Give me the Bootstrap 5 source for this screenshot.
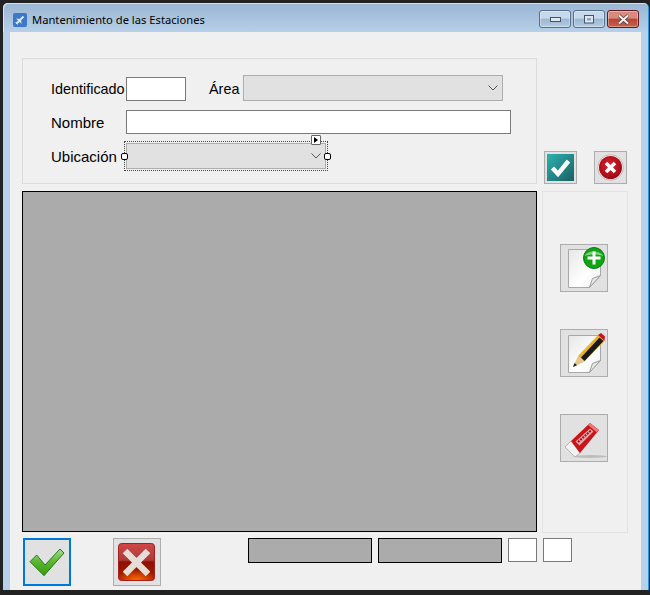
<!DOCTYPE html>
<html lang="es">
<head>
  <meta charset="UTF-8" />
  <meta name="viewport" content="width=device-width, initial-scale=1" />
  <title>Mantenimiento de las Estaciones</title>
  <link href="https://cdn.jsdelivr.net/npm/bootstrap@5.3.0/dist/css/bootstrap.min.css" rel="stylesheet">
  <style>
    html, body { height: 595px; overflow: hidden; }
    body { background: #222; padding: 3px 1px 0 3px; font-family: "Liberation Sans", Arial, sans-serif; color: #000; }
    .win-frame { width: 646px; height: 587px; background: #b8d1ea; padding: 0 7px 0 7px; border-radius: 5px 5px 0 0; border-right: 1px solid #14a0e0; }
    .win-title { height: 29px; margin: 0 -7px; padding: 5px 7px 0 10px; background: linear-gradient(#9ab5d2, #b7d0e9); border-radius: 5px 5px 0 0; box-shadow: inset 1px 1px 0 rgba(255,255,255,.55); }
    .win-title-text { font-family: "Noto Sans", sans-serif; font-size: 11.2px; margin-left: 5px; color: #000; }
    .app-ico { width: 14px; height: 14px; }
    .cap-btn { width: 32px; height: 18px; border: 1px solid #5a6f8c; border-radius: 3px; display: flex; align-items: center; justify-content: center; background: linear-gradient(#c6d8eb 0 45%, #9cb7d3 50%, #b4cbe2 100%); box-shadow: inset 0 0 0 1px rgba(255,255,255,.35); }
    .cap-close { border-color: #5e1c24; background: linear-gradient(#d98a7c 0 45%, #bb4331 50%, #c8604f 100%); }
    .cap-gap { gap: 2px; margin-right: 2px; margin-top: -2px; }
    .win-body { width: 631px; height: 558px; background: #f0f0f0; padding: 26px 0 0 12px; }
    .top-box { width: 515px; height: 126px; border: 1px solid #dcdcdc; padding: 16px 0 0 28px; }
    .fld-row { display: flex; align-items: center; }
    .lbl { font-size: 15px; line-height: 16px; white-space: nowrap; padding-top: 1px; }
    .lbl-tight { font-size: 14.4px; }
    .txt-in, .cmb-in { border-radius: 0; padding: 0; min-height: 0; }
    .txt-in { height: 24px; border: 1px solid #7a7a7a; background: #fff; }
    .cmb-in:disabled { height: 26px; border: 1px solid #adadad; background-color: #e1e1e1; opacity: 1;
      background-image: url("data:image/svg+xml,%3csvg xmlns='http://www.w3.org/2000/svg' viewBox='0 0 10 6'%3e%3cpath fill='none' stroke='%23555' d='M.5.5 5 5 9.5.5'/%3e%3c/svg%3e");
      background-position: right 4px center; background-size: 10px 6px; }
    .lbl-id { width: 75px; }
    .in-id { width: 60px; align-self: flex-end; }
    .lbl-area { margin-left: 23px; width: 34px; }
    .cmb-area { width: 260px; }
    .row-nom { margin-top: 9px; }
    .in-nom { width: 385px; }
    .row-ubi { margin-top: 9px; }
    .cmb-wrap { position: relative; width: 200px; }
    .cmb-wrap .cmb-in { width: 200px; display: block; }
    .sel-dots { position: absolute; left: -2px; right: -2px; top: -2px; bottom: -2px; border: 1px dotted #444; pointer-events: none; }
    .sel-hnd { position: absolute; top: 10px; width: 7px; height: 7px; background: #fff; border: 1px solid #000; border-radius: 2px; }
    .sel-hnd-l { left: -5px; }
    .sel-hnd-r { right: -5px; }
    .sel-tag { position: absolute; right: 5px; top: -8px; width: 10px; height: 10px; background: #fff; border: 1px solid #666; border-radius: 1px; }
    .sel-tag::after { content: ""; position: absolute; left: 2px; top: 1px; border-left: 4px solid #000; border-top: 3px solid transparent; border-bottom: 3px solid transparent; }
    .ok-col { margin-left: 7px; gap: 17px; align-self: flex-end; }
    .sq-btn { padding: 0; border: 1px solid #adadad; border-radius: 0; background: #e1e1e1; display: flex; align-items: center; justify-content: center; }
    .sq-33 { width: 33px; height: 33px; }
    .sq-48 { width: 48px; height: 48px; }
    .sq-focus { border: 2px solid #0078d7; }
    .mid-row { margin-top: 7px; height: 342px; }
    .grid-box { width: 515px; height: 341px; background: #ababab; border: 1px solid #000; }
    .side-box { width: 86px; margin-left: 5px; border: 1px solid #e3e3e3; padding: 52px 0 0 17px; gap: 37px; }
    .bot-row { margin-top: 5px; padding-left: 1px; }
    .btn-gap { margin-left: 42px; }
    .stat-bars { margin-left: 87px; gap: 6px; }
    .stat-bar { width: 124px; height: 25px; background: #ababab; border: 1px solid #000; }
    .stat-in { width: 29px; }
  </style>
</head>
<body>

<div class="win-frame">
  <div class="win-title d-flex align-items-center">
    <svg class="app-ico" viewBox="0 0 14 14">
      <rect width="14" height="14" rx="2" fill="#3a78c8"/>
      <path d="M3.500 10.500 10.500 3.500" stroke="#dbe8f6" stroke-width="2"/>
      <path d="M3 5.500l5 .5-2 2.500zM8.500 11l-.5-5-2.500 2z" fill="#dbe8f6"/>
      <path d="M2.500 9.500l2 2" stroke="#dbe8f6"/>
    </svg>
    <span class="win-title-text">Mantenimiento de las Estaciones</span>
    <div class="d-flex ms-auto cap-gap">
      <div class="cap-btn"><svg width="11" height="5" viewBox="0 0 11 5"><rect x=".5" y=".5" width="10" height="4" fill="#dfe6ee" stroke="#44546a"/></svg></div>
      <div class="cap-btn"><svg width="11" height="9" viewBox="0 0 11 9"><rect x=".5" y=".5" width="9" height="7.500" fill="#dfe6ee" stroke="#44546a"/><rect x="3" y="3" width="4" height="2.500" fill="#8ea6c0"/></svg></div>
      <div class="cap-btn cap-close"><svg width="13" height="11" viewBox="0 0 13 11"><path d="M2 1.500l9 8M11 1.500l-9 8" stroke="#4b3a3a" stroke-width="3.400"/><path d="M2 1.500l9 8M11 1.500l-9 8" stroke="#f2f2f2" stroke-width="2"/></svg></div>
    </div>
  </div>

  <div class="win-body">
    <div class="d-flex">
      <div class="top-box">
        <div class="fld-row">
          <span class="lbl lbl-tight lbl-id">Identificado</span>
          <input class="form-control txt-in in-id" type="text">
          <span class="lbl lbl-tight lbl-area">Área</span>
          <select class="form-select cmb-in cmb-area" disabled></select>
        </div>
        <div class="fld-row row-nom">
          <span class="lbl lbl-id">Nombre</span>
          <input class="form-control txt-in in-nom" type="text">
        </div>
        <div class="fld-row row-ubi">
          <span class="lbl lbl-id">Ubicación</span>
          <div class="cmb-wrap">
            <select class="form-select cmb-in" disabled></select>
            <span class="sel-dots"></span>
            <span class="sel-hnd sel-hnd-l"></span>
            <span class="sel-hnd sel-hnd-r"></span>
            <span class="sel-tag"></span>
          </div>
        </div>
      </div>
      <div class="d-flex ok-col">
        <button class="sq-btn sq-33" type="button">
          <svg width="27" height="27" viewBox="0 0 27 27">
            <defs><linearGradient id="teal" x1="0" y1="0" x2="1" y2="1"><stop offset="0" stop-color="#2bb3b0"/><stop offset="1" stop-color="#1c5f63"/></linearGradient></defs>
            <rect width="27" height="27" fill="url(#teal)"/>
            <path d="M5.500 14l5.500 6 10.500-13" fill="none" stroke="#fff" stroke-width="4.400"/>
          </svg>
        </button>
        <button class="sq-btn sq-33" type="button">
          <svg width="27" height="27" viewBox="0 0 27 27">
            <defs><radialGradient id="redball" cx=".45" cy=".4" r=".7"><stop offset="0" stop-color="#e2202c"/><stop offset="1" stop-color="#8e0610"/></radialGradient></defs>
            <circle cx="13.500" cy="13.500" r="12.800" fill="#f3f3f3" stroke="#c9b5b5"/>
            <circle cx="13.500" cy="13.500" r="11.500" fill="url(#redball)"/>
            <path d="M9 9l9 9M18 9l-9 9" stroke="#fff" stroke-width="3.600"/>
          </svg>
        </button>
      </div>
    </div>

    <div class="d-flex mid-row">
      <div class="grid-box"></div>
      <div class="d-flex flex-column side-box">
        <button class="sq-btn sq-48" type="button">
          <svg width="46" height="46" viewBox="0 0 46 46">
            <defs><linearGradient id="pg1" x1="0" y1="0" x2="1" y2="1"><stop offset="0" stop-color="#e6e6e6"/><stop offset=".6" stop-color="#fff"/><stop offset="1" stop-color="#ececec"/></linearGradient></defs>
            <path d="M7.500 4.500h32v26l-11 12h-21z" fill="url(#pg1)" stroke="#a8a8a8"/>
            <path d="M28.500 42.500l3-9 8-3z" fill="#e9e9e9" stroke="#9c9c9c"/>
            <circle cx="33" cy="13" r="10.500" fill="#12a512" stroke="#0b7a1a"/>
            <path d="M23.500 11c3-6 15-6 19 0-6-2-13-2-19 0z" fill="#79d779"/>
            <path d="M33 6.500v13M26.500 13h13" stroke="#fff" stroke-width="3"/>
          </svg>
        </button>
        <button class="sq-btn sq-48" type="button">
          <svg width="46" height="46" viewBox="0 0 46 46">
            <path d="M7.500 5.500h32v25l-11 12h-21z" fill="url(#pg1)" stroke="#a8a8a8"/>
            <path d="M28.500 42.500l3-9 8-3z" fill="#e9e9e9" stroke="#9c9c9c"/>
            <path d="M17 26 37 5l6.500 6-20.500 21z" fill="#e9b526"/>
            <path d="M20 27.500 38.500 7.500l4 3.500L23.500 31z" fill="#1b1b1b"/>
            <path d="M37 5l3-2 4 3.500-.5 4.500z" fill="#c9151b"/>
            <path d="M12 37l5-11 6 6z" fill="#e4c78c"/>
            <path d="M12 37l1.500-4 2.500 2.300z" fill="#222"/>
          </svg>
        </button>
        <button class="sq-btn sq-48" type="button">
          <svg width="46" height="46" viewBox="0 0 46 46">
            <ellipse cx="29" cy="41.500" rx="17" ry="1.500" fill="#bdbdbd"/>
            <path d="M4 32l6-6 9 12-5 4z" fill="#f1f1f1" stroke="#a9a9a9" stroke-width=".8"/>
            <path d="M10 26 29 8l9 7-19 23z" fill="#c9141c"/>
            <path d="M29 8l9 7-2 2.500-9-7.500z" fill="#e87a7a"/>
            <path d="M14.500 26.500 29 13.500l3.500 3-14 14z" fill="#e8a4a4"/>
            <path d="M17 27 30 15.500" stroke="#a81016" stroke-width="2" stroke-dasharray="2 1"/>
          </svg>
        </button>
      </div>
    </div>

    <div class="d-flex bot-row">
      <button class="sq-btn sq-48 sq-focus" type="button">
        <svg width="36" height="30" viewBox="0 0 36 30">
          <defs><linearGradient id="grn" x1="0" y1="0" x2="0" y2="1"><stop offset="0" stop-color="#a8dc8e"/><stop offset=".5" stop-color="#58b52c"/><stop offset="1" stop-color="#3c9a0e"/></linearGradient></defs>
          <path d="M1 14.700 7.700 8 16 18 31 2l4 4-20 22.700z" fill="url(#grn)" stroke="#247a2a"/>
        </svg>
      </button>
      <button class="sq-btn sq-48 btn-gap" type="button">
        <svg width="38" height="38" viewBox="0 0 38 38">
          <defs>
            <linearGradient id="redsq" x1="0" y1="0" x2="0" y2="1"><stop offset="0" stop-color="#d04848"/><stop offset=".45" stop-color="#ac3a3a"/><stop offset=".5" stop-color="#8f1000"/><stop offset="1" stop-color="#a82000"/></linearGradient>
            <radialGradient id="redglow" cx=".5" cy="1" r=".6"><stop offset="0" stop-color="#ff6a00"/><stop offset="1" stop-color="#ff6a00" stop-opacity="0"/></radialGradient>
          </defs>
          <rect x=".5" y=".5" width="36" height="37" rx="3" fill="url(#redsq)" stroke="#a51f1f"/>
          <rect x="1" y="19" width="35" height="18" rx="3" fill="url(#redglow)"/>
          <path d="M7 8l23 23M30 8 7 31" stroke="#e8dcd6" stroke-width="6.500"/>
        </svg>
      </button>
      <div class="d-flex stat-bars">
        <div class="stat-bar"></div>
        <div class="stat-bar"></div>
        <input class="form-control txt-in stat-in" type="text">
        <input class="form-control txt-in stat-in" type="text">
      </div>
    </div>
  </div>
</div>

<script src="https://cdn.jsdelivr.net/npm/bootstrap@5.3.0/dist/js/bootstrap.bundle.min.js"></script>
</body>
</html>
